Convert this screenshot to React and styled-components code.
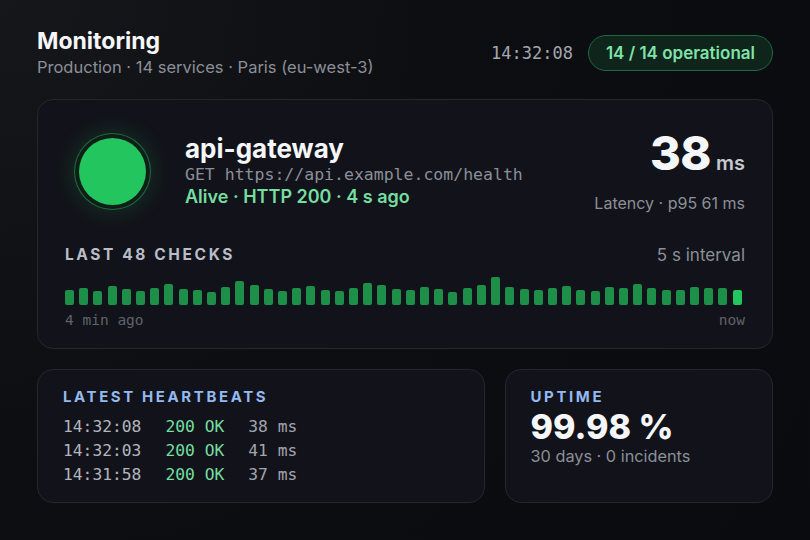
import React from 'react';
import styled, { createGlobalStyle } from 'styled-components';

const GlobalStyle = createGlobalStyle`
  html, body {
    margin: 0;
    padding: 0;
    background: #0b0c10;
  }
  body {
    font-family: Inter, "Noto Sans", sans-serif;
    color: #f3f4f6;
  }
`;

const mono = '"DejaVu Sans Mono", "Liberation Mono", monospace';

const Page = styled.div`
  width: 810px;
  height: 540px;
  box-sizing: border-box;
  padding: 27px 37px 0 37px;
  background: radial-gradient(circle at 0 0, #16171a 0%, #0d0e12 45%, #0a0b0f 100%);
  display: flex;
  flex-direction: column;
`;

const Header = styled.header`
  display: flex;
  align-items: center;
  justify-content: space-between;
  margin-bottom: 21px;
`;

const TitleBlock = styled.div`
  display: flex;
  flex-direction: column;
  gap: 1px;
`;

const Title = styled.h1`
  margin: 0;
  font-size: 23px;
  line-height: 28px;
  font-weight: 700;
  color: #f5f6f8;
`;

const Muted = styled.div`
  font-size: ${(p) => p.size || 16}px;
  line-height: ${(p) => p.lh || 22}px;
  font-weight: ${(p) => p.weight || 400};
  color: ${(p) => p.color || '#8b8f98'};
  font-family: ${(p) => (p.mono ? mono : 'inherit')};
  text-align: ${(p) => p.align || 'left'};
  white-space: nowrap;
`;

const HeaderRight = styled.div`
  display: flex;
  align-items: center;
  gap: 15px;
`;

const Clock = styled.span`
  font-family: ${mono};
  font-size: 17px;
  color: #a3a6ae;
`;

const Badge = styled.span`
  display: inline-flex;
  align-items: center;
  height: 36px;
  box-sizing: border-box;
  padding: 0 17px;
  border-radius: 18px;
  border: 1px solid #1e6a42;
  background: #0f241a;
  color: #7fe3a9;
  font-size: 17px;
  font-weight: 600;
`;

const Card = styled.section`
  box-sizing: border-box;
  background: #12131a;
  border: 1px solid #25262e;
  border-radius: 16px;
  padding: ${(p) => p.pad || '24px 27px'};
  height: ${(p) => p.h}px;
`;

const TopRow = styled.div`
  display: flex;
  align-items: center;
`;

const DotWrap = styled.div`
  width: 94px;
  height: 94px;
  flex-shrink: 0;
  display: flex;
  align-items: center;
  justify-content: center;
  margin-right: 26px;
`;

const Dot = styled.div`
  width: 67px;
  height: 67px;
  border-radius: 50%;
  background: #22c55e;
  box-shadow: 0 0 0 4px #0f1f17, 0 0 0 5px #1f6a40, 0 0 22px 6px rgba(34, 197, 94, 0.18);
`;

const Service = styled.div`
  flex: 1;
  display: flex;
  flex-direction: column;
`;

const ServiceName = styled.div`
  font-size: 26px;
  line-height: 30px;
  font-weight: 700;
  color: #f5f6f8;
`;

const Latency = styled.div`
  display: flex;
  flex-direction: column;
  align-items: flex-end;
  gap: 6px;
`;

const BigValue = styled.div`
  display: flex;
  align-items: baseline;
  gap: 5px;
  line-height: 48px;
`;

const BigNum = styled.span`
  font-size: 47px;
  font-weight: 800;
  color: #f5f6f8;
  letter-spacing: -0.5px;
`;

const Unit = styled.span`
  font-size: 20px;
  font-weight: 600;
  color: #c5c8cf;
`;

const SectionHead = styled.div`
  display: flex;
  justify-content: space-between;
  align-items: center;
  margin-top: 27px;
`;

const Label = styled.div`
  font-size: ${(p) => p.size || 15.5}px;
  line-height: 20px;
  font-weight: 700;
  letter-spacing: 2.6px;
  color: ${(p) => p.color || '#b9bdc7'};
`;

const Bars = styled.div`
  display: flex;
  align-items: flex-end;
  justify-content: space-between;
  height: 30px;
  margin: 10px 3px 0 0;
`;

const Bar = styled.div`
  width: 9px;
  border-radius: 2px;
  background: ${(p) => (p.last ? '#22c55e' : 'rgba(34, 197, 94, 0.7)')};
`;

const Axis = styled.div`
  display: flex;
  justify-content: space-between;
  margin-top: 6px;
  font-family: ${mono};
  font-size: 14.5px;
  line-height: 18px;
  color: #5f626b;
`;

const BottomGrid = styled.div`
  display: grid;
  grid-template-columns: 5fr 3fr;
  gap: 20px;
  margin-top: 20px;
`;

const Rows = styled.div`
  display: grid;
  grid-template-columns: max-content max-content max-content;
  column-gap: 24px;
  margin-top: 8px;
  font-family: ${mono};
  font-size: 16.3px;
  line-height: 24px;
`;

const Cell = styled.span`
  color: ${(p) => p.color || '#b3b6be'};
`;

const UptimeValue = styled.div`
  font-size: 34px;
  line-height: 40px;
  font-weight: 800;
  color: #f5f6f8;
`;

const heights = [
  15, 17, 14, 19, 16, 14, 17, 21, 16, 15, 13, 18, 24, 20, 16, 14,
  17, 19, 15, 14, 17, 22, 20, 16, 15, 18, 16, 13, 17, 20, 28, 18,
  16, 15, 17, 19, 15, 14, 18, 17, 21, 17, 15, 15, 18, 17, 17, 15,
];

const beats = [
  ['14:32:08', '38 ms'],
  ['14:32:03', '41 ms'],
  ['14:31:58', '37 ms'],
];

export default function App() {
  return (
    <>
      <GlobalStyle />
      <Page>
        <Header>
          <TitleBlock>
            <Title>Monitoring</Title>
            <Muted size={16.5}>Production · 14 services · Paris (eu-west-3)</Muted>
          </TitleBlock>
          <HeaderRight>
            <Clock>14:32:08</Clock>
            <Badge>14 / 14 operational</Badge>
          </HeaderRight>
        </Header>

        <Card h={250}>
          <TopRow>
            <DotWrap>
              <Dot />
            </DotWrap>
            <Service>
              <ServiceName>api-gateway</ServiceName>
              <Muted mono size={16.5}>GET https://api.example.com/health</Muted>
              <Muted size={18} weight={600} color="#74dea0">
                Alive · HTTP 200 · 4 s ago
              </Muted>
            </Service>
            <Latency>
              <BigValue>
                <BigNum>38</BigNum>
                <Unit>ms</Unit>
              </BigValue>
              <Muted align="right" lh={20}>Latency · p95 61 ms</Muted>
            </Latency>
          </TopRow>

          <SectionHead>
            <Label>LAST 48 CHECKS</Label>
            <Muted size={17} lh={20}>5 s interval</Muted>
          </SectionHead>
          <Bars>
            {heights.map((h, i) => (
              <Bar key={i} last={i === heights.length - 1} style={{ height: h }} />
            ))}
          </Bars>
          <Axis>
            <span>4 min ago</span>
            <span>now</span>
          </Axis>
        </Card>

        <BottomGrid>
          <Card h={134} pad="17px 25px">
            <Label size={15} color="#94b9f0">LATEST HEARTBEATS</Label>
            <Rows>
              {beats.map(([t, ms]) => (
                <React.Fragment key={t}>
                  <Cell>{t}</Cell>
                  <Cell color="#74dea0">200 OK</Cell>
                  <Cell color="#a2a5ad">{ms}</Cell>
                </React.Fragment>
              ))}
            </Rows>
          </Card>
          <Card h={134} pad="17px 25px">
            <Label size={15} color="#94b9f0">UPTIME</Label>
            <UptimeValue>99.98 %</UptimeValue>
            <Muted size={16.3} lh={18}>30 days · 0 incidents</Muted>
          </Card>
        </BottomGrid>
      </Page>
    </>
  );
}
